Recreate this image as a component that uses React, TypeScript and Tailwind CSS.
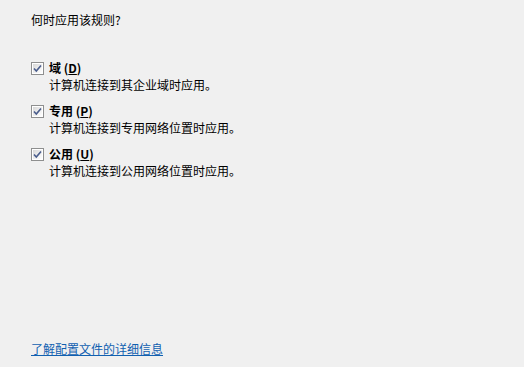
import React from "react";

const font = { fontFamily: '"Noto Sans CJK SC", "Liberation Sans", sans-serif' };

function CheckBox() {
  return (
    <svg width="13" height="13" viewBox="0 0 13 13" className="shrink-0">
      <defs>
        <linearGradient id="cbg" x1="0" y1="0" x2="1" y2="1">
          <stop offset="0" stopColor="#d8d8d8" />
          <stop offset="1" stopColor="#ffffff" />
        </linearGradient>
      </defs>
      <rect x="0.5" y="0.5" width="12" height="12" fill="#fff" stroke="#8e8f8f" />
      <rect x="2" y="2" width="9" height="9" fill="url(#cbg)" />
      <path d="M3 6.5 L5.3 9 L10 3.5" fill="none" stroke="#4a5d8c" strokeWidth="1.6" />
    </svg>
  );
}

interface OptionProps {
  readonly name: string;
  readonly accessKey: string;
  readonly desc: string;
}

function Option({ name, accessKey, desc }: Readonly<OptionProps>) {
  return (
    <div className="flex flex-col">
      <div className="flex h-4 items-center gap-[5px]">
        <CheckBox />
        <span className="text-[12px] font-bold leading-4 text-black">
          {name} (<u>{accessKey}</u>)
        </span>
      </div>
      <div className="ml-[18px] mt-px text-[12px] leading-4 text-black">{desc}</div>
    </div>
  );
}

export default function App() {
  return (
    <div className="flex h-[367px] w-[524px] flex-col bg-[#f0f0f0] pl-[31px]" style={font}>
      <div className="mt-[12px] text-[12px] leading-4 text-black">何时应用该规则?</div>
      <div className="mt-[32px] flex flex-col gap-[10px]">
        <Option name="域" accessKey="D" desc="计算机连接到其企业域时应用。" />
        <Option name="专用" accessKey="P" desc="计算机连接到专用网络位置时应用。" />
        <Option name="公用" accessKey="U" desc="计算机连接到公用网络位置时应用。" />
      </div>
      <a
        href="#"
        className="mt-auto mb-[10px] self-start text-[12px] leading-4 text-[#1160b0] underline"
      >
        了解配置文件的详细信息
      </a>
    </div>
  );
}
